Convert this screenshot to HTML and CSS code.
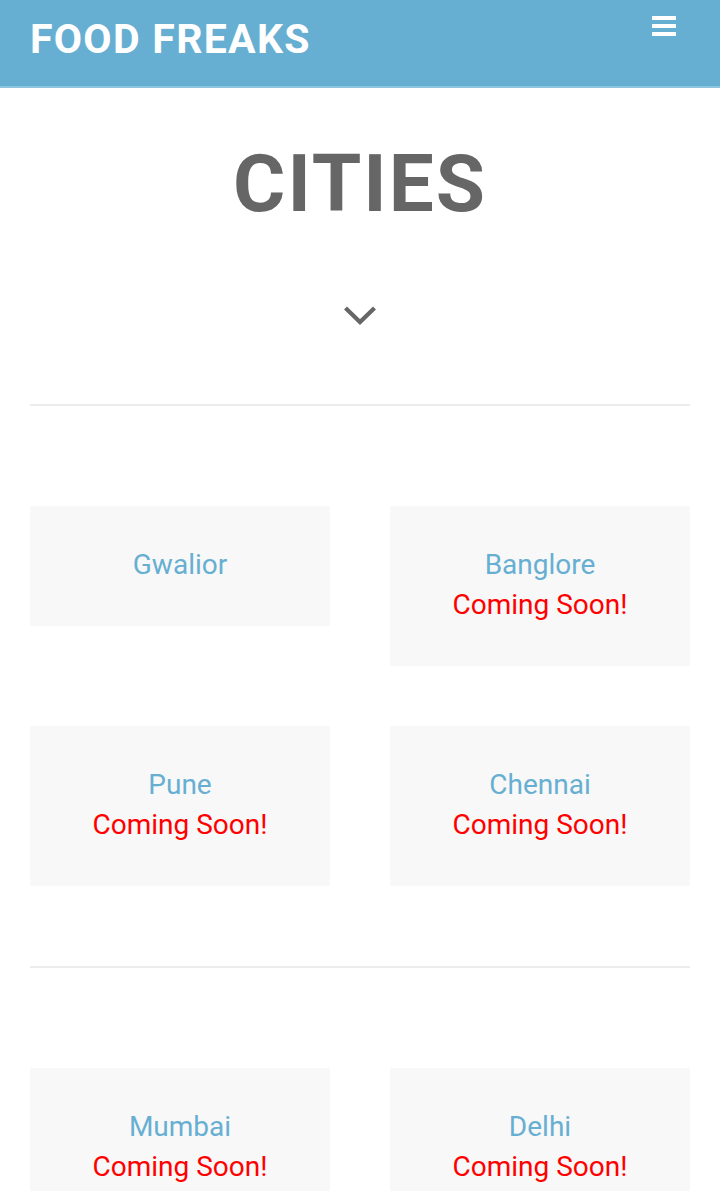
FILE: index.html
```html
<!DOCTYPE html>
<html lang="en">
<head>
<meta charset="utf-8">
<title>Food Freaks - Cities</title>
<link rel="stylesheet" href="styles.css">
</head>
<body>
<header class="topbar">
  <a class="brand" href="#">FOOD FREAKS</a>
  <button class="menu-btn" aria-label="Menu">
    <span class="bar"></span><span class="bar"></span><span class="bar"></span>
  </button>
</header>
<main class="page">
  <section class="intro">
    <h1 class="title">CITIES</h1>
    <svg class="chevron" width="34" height="22" viewBox="0 0 34 22" aria-hidden="true">
      <path d="M2.5 4 L17 18 L31.5 4" fill="none" stroke="#666" stroke-width="4.2"/>
    </svg>
  </section>
  <hr class="rule">
  <section class="cities">
    <div class="city-grid">
      <div class="card"><span class="city">Gwalior</span></div>
      <div class="card"><span class="city">Banglore</span><span class="soon">Coming Soon!</span></div>
      <div class="card"><span class="city">Pune</span><span class="soon">Coming Soon!</span></div>
      <div class="card"><span class="city">Chennai</span><span class="soon">Coming Soon!</span></div>
    </div>
  </section>
  <hr class="rule">
  <section class="cities">
    <div class="city-grid">
      <div class="card"><span class="city">Mumbai</span><span class="soon">Coming Soon!</span></div>
      <div class="card"><span class="city">Delhi</span><span class="soon">Coming Soon!</span></div>
    </div>
  </section>
</main>
</body>
</html>
```
FILE: styles.css
```css
* { box-sizing: border-box; }
html, body { margin: 0; padding: 0; }
body {
  font-family: Roboto, "Liberation Sans", Arial, sans-serif;
  background: #fff;
  color: #666;
  overflow: hidden;
}
.topbar {
  height: 88px;
  background: #67afd2;
  border-bottom: 2px solid #8fc4de;
  display: flex;
  justify-content: space-between;
  align-items: flex-start;
  padding: 0 44px 0 30px;
}
.brand {
  color: #fff;
  text-decoration: none;
  font-weight: 700;
  font-size: 41px;
  letter-spacing: 1.3px;
  line-height: 78px;
}
.menu-btn {
  margin-top: 16px;
  padding: 0;
  border: 0;
  background: none;
  width: 24px;
  display: flex;
  flex-direction: column;
  gap: 4px;
}
.bar {
  display: block;
  width: 24px;
  height: 4px;
  background: #fff;
}
.page { padding: 0 30px; }
.intro {
  display: flex;
  flex-direction: column;
  align-items: center;
}
.title {
  margin: 0;
  padding-top: 50px;
  font-size: 80px;
  line-height: 92px;
  font-weight: 700;
  letter-spacing: 2px;
  color: #666;
}
.chevron {
  display: block;
  margin-top: 74px;
}
.rule {
  margin: 0;
  border: 0;
  height: 2px;
  background: #ececec;
}
.intro + .rule { margin-top: 78px; }
.cities { padding: 100px 0 80px; }
.city-grid {
  display: grid;
  grid-template-columns: 300px 300px;
  column-gap: 60px;
  row-gap: 60px;
  align-items: start;
}
.card {
  background: #f8f8f8;
  padding: 39px 10px 41px;
  display: flex;
  flex-direction: column;
  align-items: center;
  font-size: 28px;
  line-height: 40px;
}
.city { color: #67afd2; }
.soon { color: #ff0000; }
```
